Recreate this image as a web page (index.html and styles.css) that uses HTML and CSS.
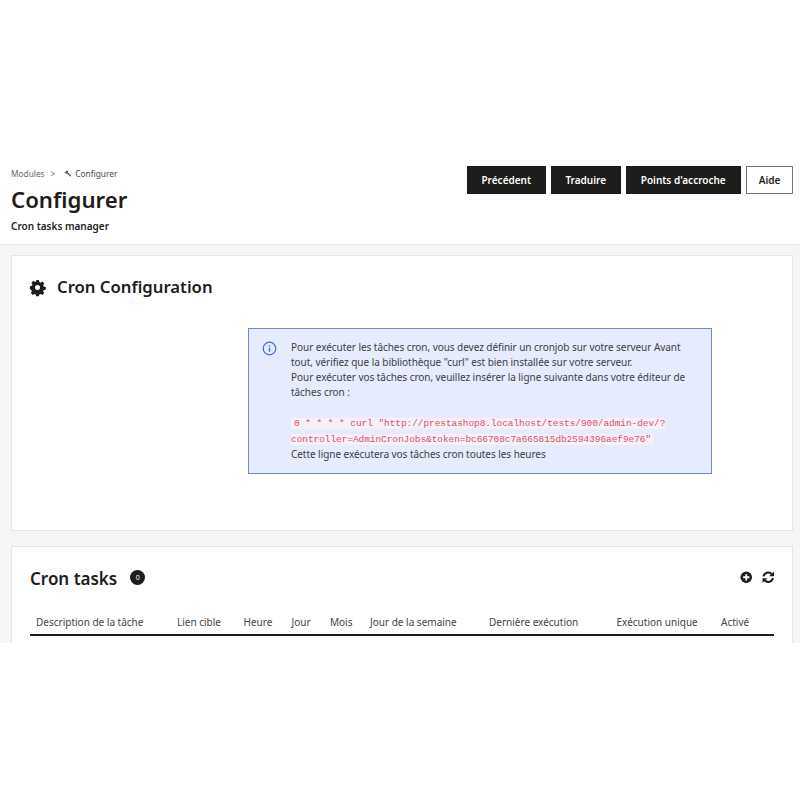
FILE: index.html
```html
<!DOCTYPE html>
<html lang="fr">
<head>
    <meta charset="UTF-8">
    <title>Configurer</title>
    <link rel="stylesheet" href="styles.css">
</head>
<body>
    <div class="page">
        <header class="page-head">
            <div class="head-left">
                <div class="breadcrumb">
                    <span>Modules</span>
                    <span class="sep">&gt;</span>
                    <svg class="wrench" viewBox="0 0 10 10"><path d="M.6 3.400 2.300 5.100c.7.300 1.500.2 2-.2l4 4c.4.400 1 .4 1.300 0 .4-.3.400-.9 0-1.300l-4-4c.4-.6.500-1.300.2-2L3.900.6 2.400 2.200l1.400 1.400-.4.400-1.400-1.400z" fill="#555"/></svg>
                    <span class="crumb-current">Configurer</span>
                </div>
                <h1>Configurer</h1>
                <div class="subtitle">Cron tasks manager</div>
            </div>
            <div class="toolbar">
                <a class="btn btn-prev">Précédent</a>
                <a class="btn btn-translate">Traduire</a>
                <a class="btn btn-hooks">Points d'accroche</a>
                <a class="btn btn-outline">Aide</a>
            </div>
        </header>

        <main class="content">
            <section class="card card-config">
                <h2 class="card-title">
                    <svg class="gear" viewBox="0 0 24 24"><path fill="#1d1d1b" fill-rule="evenodd" d="M9.800 0h4.400l.7 3.300c.7.200 1.400.5 2 .9l2.800-1.800 3.100 3.100-1.800 2.800c.4.600.7 1.300.9 2l3.300.7v4.400l-3.300.7c-.2.700-.5 1.400-.9 2l1.800 2.800-3.100 3.100-2.800-1.800c-.6.400-1.300.7-2 .9l-.7 2.900H9.800l-.7-2.900c-.7-.2-1.400-.5-2-.9l-2.800 1.800-3.100-3.100 1.800-2.800c-.4-.6-.7-1.300-.9-2L-.2 14.200V9.800l3.300-.7c.2-.7.5-1.400.9-2L2.200 4.300l3.100-3.100 2.800 1.800c.6-.4 1.300-.7 2-.9zM12 8a4 4 0 1 0 0 8 4 4 0 0 0 0-8z"/></svg>
                    Cron Configuration
                </h2>
                <div class="alert">
                    <svg class="alert-icon" viewBox="0 0 16 16"><circle cx="8" cy="8" r="6.700" fill="none" stroke="#3d66f5" stroke-width="1.300"/><rect x="7.300" y="7" width="1.400" height="4.500" fill="#3d66f5"/><rect x="7.300" y="4.500" width="1.400" height="1.500" fill="#3d66f5"/></svg>
                    <div class="alert-text">
                        Pour exécuter les tâches cron, vous devez définir un cronjob sur votre serveur Avant<br>
                        tout, vérifiez que la bibliothèque "curl" est bien installée sur votre serveur.<br>
                        Pour exécuter vos tâches cron, veuillez insérer la ligne suivante dans votre éditeur de<br>
                        tâches cron :<br>
                        <br>
                        <code>0 * * * * curl "http://prestashop8.localhost/tests/900/admin-dev/?<br>controller=AdminCronJobs&amp;token=bc66708c7a665815db2594396aef9e76"</code><br>
                        Cette ligne exécutera vos tâches cron toutes les heures
                    </div>
                </div>
            </section>

            <section class="card card-tasks">
                <div class="tasks-head">
                    <h2 class="tasks-title">Cron tasks</h2>
                    <span class="badge">0</span>
                    <div class="tasks-actions">
                        <svg class="action" viewBox="0 0 14 14"><circle cx="7" cy="7" r="6.500" fill="#1d1d1b"/><path d="M7 3.500v7M3.500 7h7" stroke="#fff" stroke-width="2"/></svg>
                        <svg class="action" viewBox="0 0 14 14"><path d="M1.800 6a5.200 5.200 0 0 1 8.900-2.700M12.200 8a5.200 5.200 0 0 1-8.900 2.700" fill="none" stroke="#1d1d1b" stroke-width="2.400"/><path d="M13.400.6v5.400H8zM.6 13.400V8H6z" fill="#1d1d1b"/></svg>
                    </div>
                </div>
                <div class="table-head">
                    <span class="col col-desc">Description de la tâche</span>
                    <span class="col col-link">Lien cible</span>
                    <span class="col col-hour">Heure</span>
                    <span class="col col-day">Jour</span>
                    <span class="col col-month">Mois</span>
                    <span class="col col-week">Jour de la semaine</span>
                    <span class="col col-last">Dernière exécution</span>
                    <span class="col col-once">Exécution unique</span>
                    <span class="col col-active">Activé</span>
                </div>
            </section>
        </main>
    </div>
</body>
</html>
```

FILE: styles.css
```css
body {
    margin: 0;
    padding: 0;
    background-color: #fff;
    color: #1d1d1b;
    font-family: 'Noto Sans', sans-serif;
}

.page {
    margin-top: 155px;
    height: 488px;
    overflow: hidden;
    background-color: #f5f5f5;
}

.page-head {
    display: flex;
    justify-content: space-between;
    height: 78px;
    padding: 11px 7px 0 11px;
    background-color: #fff;
    border-bottom: 1px solid #e5e5e5;
}

.breadcrumb {
    display: flex;
    align-items: center;
    gap: 4px;
    height: 14px;
    font-size: 8.300px;
    color: #6c6c6c;
}

.breadcrumb .sep {
    margin: 0 5px 0 2px;
}

.wrench {
    width: 7px;
    height: 7px;
}

.crumb-current {
    color: #4a4a4a;
}

h1 {
    margin: 5px 0 0;
    font-size: 22.200px;
    line-height: 30px;
    font-weight: 600;
}

.subtitle {
    margin-top: 4px;
    font-size: 10px;
    line-height: 14px;
    font-weight: 600;
}

.toolbar {
    display: flex;
    gap: 5.500px;
}

.btn {
    display: flex;
    align-items: center;
    justify-content: center;
    box-sizing: border-box;
    height: 28px;
    background-color: #1d1d1b;
    border: 1px solid #1d1d1b;
    color: #fff;
    font-size: 10px;
    font-weight: 600;
}

.btn-prev { width: 78.500px; }
.btn-translate { width: 69.500px; }
.btn-hooks { width: 114.500px; }

.btn-outline {
    width: 47px;
    background-color: #fff;
    border-color: #777;
    color: #1d1d1b;
}

.content {
    display: flex;
    flex-direction: column;
    gap: 15px;
    padding: 10px 7px 0 11px;
}

.card {
    background-color: #fff;
    border: 1px solid #e5e5e5;
}

.card-config {
    height: 276px;
    box-sizing: border-box;
}

.card-tasks {
    min-height: 140px;
}

.card-title {
    display: flex;
    align-items: center;
    gap: 12px;
    margin: 20px 0 0 18px;
    font-size: 16.700px;
    line-height: 22px;
    font-weight: 600;
}

.gear {
    width: 15px;
    height: 15px;
    overflow: visible;
}

.alert {
    display: flex;
    gap: 14px;
    box-sizing: border-box;
    width: 464px;
    height: 146px;
    margin: 30px 0 0 236px;
    padding: 11px 13px;
    background-color: #e6ebfd;
    border: 1px solid #6a87e8;
}

.alert-icon {
    flex: none;
    width: 15px;
    height: 15px;
    margin-top: 1px;
}

.alert-text {
    font-size: 10px;
    line-height: 15px;
    letter-spacing: -0.050px;
    color: #3d3d3d;
    white-space: nowrap;
}

code {
    padding: 0 2px 0 3px;
    font-family: 'Liberation Mono', monospace;
    font-size: 9.400px;
    letter-spacing: 0;
    color: #d6506f;
    background-color: #f6f1f6;
}

.tasks-head {
    display: flex;
    align-items: center;
    margin: 19px 18px 0;
    height: 24px;
}

.tasks-title {
    margin: 0;
    font-size: 17px;
    font-weight: 600;
}

.badge {
    display: flex;
    align-items: center;
    justify-content: center;
    width: 15px;
    height: 15px;
    margin-left: 13px;
    margin-top: -2px;
    border-radius: 50%;
    background-color: #1d1d1b;
    color: #fff;
    font-size: 7px;
}

.tasks-actions {
    display: flex;
    gap: 9px;
    margin-left: auto;
    margin-top: -2px;
}

.action {
    width: 12.500px;
    height: 12.500px;
}

.table-head {
    display: flex;
    align-items: center;
    box-sizing: border-box;
    height: 28px;
    margin: 18px 18px 0;
    padding-top: 1px;
    border-bottom: 2px solid #1d1d1b;
    font-size: 10px;
    color: #444;
}

.col {
    flex: none;
    white-space: nowrap;
    padding-left: 6px;
    box-sizing: border-box;
}

.col-desc { width: 141px; }
.col-link { width: 66.500px; }
.col-hour { width: 48px; }
.col-day { width: 38.500px; }
.col-month { width: 40px; }
.col-week { width: 119px; }
.col-last { width: 127.500px; }
.col-once { width: 104.500px; }
.col-active { width: 58px; }
```
